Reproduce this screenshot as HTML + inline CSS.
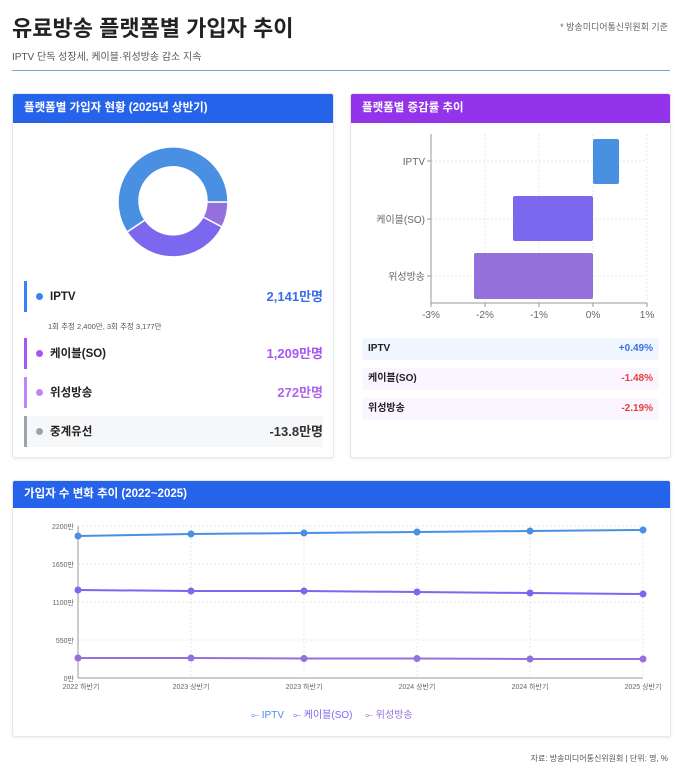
<!DOCTYPE html>
<html><head><meta charset="utf-8"><style>
*{margin:0;padding:0;box-sizing:border-box}
body{width:680px;height:774px;background:#fff;font-family:"Liberation Sans","Noto Sans CJK KR",sans-serif;position:relative;overflow:hidden;color:#222}
.a{position:absolute}
.card{position:absolute;background:#fff;border:1px solid #e5e7eb;border-radius:3px;box-shadow:0 1px 3px rgba(0,0,0,.08);overflow:hidden}
.hd{height:29px;color:#fff;font-size:11.5px;font-weight:bold;padding:0 11px;line-height:29px}
.row{position:absolute;left:11px;width:299px;height:31px;border-left:3px solid;font-size:11.5px;font-weight:bold;display:flex;align-items:center;line-height:14px}
.row .d{margin-left:9px;margin-right:7px;width:7px;height:7px;border-radius:50%}
.row .v{margin-left:auto;font-size:13px}
.tr{position:absolute;left:11px;width:297px;height:22px;border-radius:3px;font-size:10px;font-weight:bold;padding:0 6px;display:flex;align-items:center;justify-content:space-between;line-height:12px}
</style></head><body>
<div class="a" style="left:12px;top:11px;font-size:22px;font-weight:bold;color:#222">유료방송 플랫폼별 가입자 추이</div>
<div class="a" style="right:12px;top:20px;font-size:9px;color:#666">* 방송미디어통신위원회 기준</div>
<div class="a" style="left:12px;top:48px;font-size:10px;color:#555">IPTV 단독 성장세, 케이블·위성방송 감소 지속</div>
<div class="a" style="left:12px;top:70px;width:658px;height:1px;background:#7aa2e3"></div>

<div class="card" style="left:12px;top:93px;width:322px;height:365px">
<div class="hd" style="background:#2563eb">플랫폼별 가입자 현황 (2025년 상반기)</div>
<svg class="a" style="left:0;top:0" width="322" height="180">
<path d="M215,108 A55,55 0 0 1 209,133 L190,123 A34,34 0 0 0 194,108 Z" fill="#9370db" stroke="#fff" stroke-width="1.5"/>
<path d="M209,133 A55,55 0 0 1 114,138 L132,126 A34,34 0 0 0 190,123 Z" fill="#7b68ee" stroke="#fff" stroke-width="1.5"/>
<path d="M114,138 A55,55 0 1 1 215,108 L194,108 A34,34 0 1 0 132,126 Z" fill="#4a90e2" stroke="#fff" stroke-width="1.5"/>
</svg>
<div class="row" style="top:187px;border-color:#3b82f6"><div class="d" style="background:#3b82f6"></div><div>IPTV</div><div class="v" style="color:#3b6fe6">2,141만명</div></div>
<div class="a" style="left:35px;top:227px;font-size:7.5px;color:#555">1회 추정 2,400만, 3회 추정 3,177만</div>
<div class="row" style="top:244px;border-color:#a855f7"><div class="d" style="background:#a855f7"></div><div>케이블(SO)</div><div class="v" style="color:#a855f7">1,209만명</div></div>
<div class="row" style="top:283px;border-color:#c084fc"><div class="d" style="background:#c084fc"></div><div>위성방송</div><div class="v" style="color:#b063f0">272만명</div></div>
<div class="row" style="top:322px;border-color:#9ca3af;background:#f6f7f9"><div class="d" style="background:#9ca3af"></div><div>중계유선</div><div class="v" style="color:#333">-13.8만명</div></div>
</div>

<div class="card" style="left:350px;top:93px;width:321px;height:365px">
<div class="hd" style="background:#9333ea">플랫폼별 증감률 추이</div>
<svg class="a" style="left:0;top:0" width="321" height="230" font-family="Liberation Sans,Noto Sans CJK KR,sans-serif">
<g stroke="#e5e7eb" stroke-dasharray="2,2"><line x1="134" y1="40" x2="134" y2="209"/><line x1="188" y1="40" x2="188" y2="209"/><line x1="242" y1="40" x2="242" y2="209"/><line x1="296" y1="40" x2="296" y2="209"/>
<line x1="80" y1="67" x2="296" y2="67"/><line x1="80" y1="125" x2="296" y2="125"/><line x1="80" y1="182" x2="296" y2="182"/></g>
<rect x="242" y="45" width="26" height="45" rx="2" fill="#4a90e2"/>
<rect x="162" y="102" width="80" height="45" rx="2" fill="#7b68ee"/>
<rect x="123" y="159" width="119" height="46" rx="2" fill="#9370db"/>
<g stroke="#999"><line x1="80" y1="40" x2="80" y2="209"/><line x1="80" y1="209" x2="296" y2="209"/>
<line x1="76" y1="67" x2="80" y2="67"/><line x1="76" y1="125" x2="80" y2="125"/><line x1="76" y1="182" x2="80" y2="182"/>
<line x1="80" y1="209" x2="80" y2="213"/><line x1="134" y1="209" x2="134" y2="213"/><line x1="188" y1="209" x2="188" y2="213"/><line x1="242" y1="209" x2="242" y2="213"/><line x1="296" y1="209" x2="296" y2="213"/></g>
<g font-size="10" fill="#666" text-anchor="end"><text x="74" y="71">IPTV</text><text x="74" y="129">케이블(SO)</text><text x="74" y="186">위성방송</text></g>
<g font-size="10" fill="#666" text-anchor="middle"><text x="80" y="224">-3%</text><text x="134" y="224">-2%</text><text x="188" y="224">-1%</text><text x="242" y="224">0%</text><text x="296" y="224">1%</text></g>
</svg>
<div class="tr" style="top:244px;background:#eff6ff"><span>IPTV</span><span style="color:#3b6fe6">+0.49%</span></div>
<div class="tr" style="top:274px;background:#faf5ff"><span>케이블(SO)</span><span style="color:#e53e3e">-1.48%</span></div>
<div class="tr" style="top:304px;background:#faf5ff"><span>위성방송</span><span style="color:#e53e3e">-2.19%</span></div>
</div>

<div class="card" style="left:12px;top:480px;width:659px;height:257px">
<div class="hd" style="background:#2563eb;height:27px;line-height:27px">가입자 수 변화 추이 (2022~2025)</div>
<svg class="a" style="left:0;top:0" width="659" height="257" font-family="Liberation Sans,Noto Sans CJK KR,sans-serif">
<g stroke="#e5e7eb" stroke-dasharray="2,2"><line x1="65" y1="45" x2="630" y2="45"/><line x1="65" y1="83" x2="630" y2="83"/><line x1="65" y1="121" x2="630" y2="121"/><line x1="65" y1="159" x2="630" y2="159"/>
<line x1="178" y1="45" x2="178" y2="197"/><line x1="291" y1="45" x2="291" y2="197"/><line x1="404" y1="45" x2="404" y2="197"/><line x1="517" y1="45" x2="517" y2="197"/><line x1="630" y1="45" x2="630" y2="197"/></g>
<g stroke="#999"><line x1="65" y1="45" x2="65" y2="197"/><line x1="65" y1="197" x2="630" y2="197"/></g>
<g font-size="7" fill="#666" text-anchor="end"><text x="61" y="48">2200만</text><text x="61" y="86">1650만</text><text x="61" y="124">1100만</text><text x="61" y="162">550만</text><text x="61" y="200">0만</text></g>
<g font-size="7" fill="#666" text-anchor="middle"><text x="68" y="208">2022 하반기</text><text x="178" y="208">2023 상반기</text><text x="291" y="208">2023 하반기</text><text x="404" y="208">2024 상반기</text><text x="517" y="208">2024 하반기</text><text x="630" y="208">2025 상반기</text></g>
<g fill="none" stroke-width="2"><polyline stroke="#4a90e2" points="65,55 178,53 291,52 404,51 517,50 630,49"/>
<polyline stroke="#7b68ee" points="65,109 178,110 291,110 404,111 517,112 630,113"/>
<polyline stroke="#9370db" points="65,177 178,177 291,177.5 404,177.5 517,178 630,178"/></g>
<g fill="#4a90e2"><circle cx="65" cy="55" r="3.5"/><circle cx="178" cy="53" r="3.5"/><circle cx="291" cy="52" r="3.5"/><circle cx="404" cy="51" r="3.5"/><circle cx="517" cy="50" r="3.5"/><circle cx="630" cy="49" r="3.5"/></g>
<g fill="#7b68ee"><circle cx="65" cy="109" r="3.5"/><circle cx="178" cy="110" r="3.5"/><circle cx="291" cy="110" r="3.5"/><circle cx="404" cy="111" r="3.5"/><circle cx="517" cy="112" r="3.5"/><circle cx="630" cy="113" r="3.5"/></g>
<g fill="#9370db"><circle cx="65" cy="177" r="3.5"/><circle cx="178" cy="177" r="3.5"/><circle cx="291" cy="177.5" r="3.5"/><circle cx="404" cy="177.5" r="3.5"/><circle cx="517" cy="178" r="3.5"/><circle cx="630" cy="178" r="3.5"/></g>
<g font-size="10"><text x="238" y="237" fill="#4a90e2">⟜ IPTV</text><text x="280" y="237" fill="#7b68ee">⟜ 케이블(SO)</text><text x="352" y="237" fill="#9370db">⟜ 위성방송</text></g>
</svg>
</div>
<div class="a" style="right:12px;top:753px;font-size:8px;color:#555">자료: 방송미디어통신위원회 | 단위: 명, %</div>
</body></html>
